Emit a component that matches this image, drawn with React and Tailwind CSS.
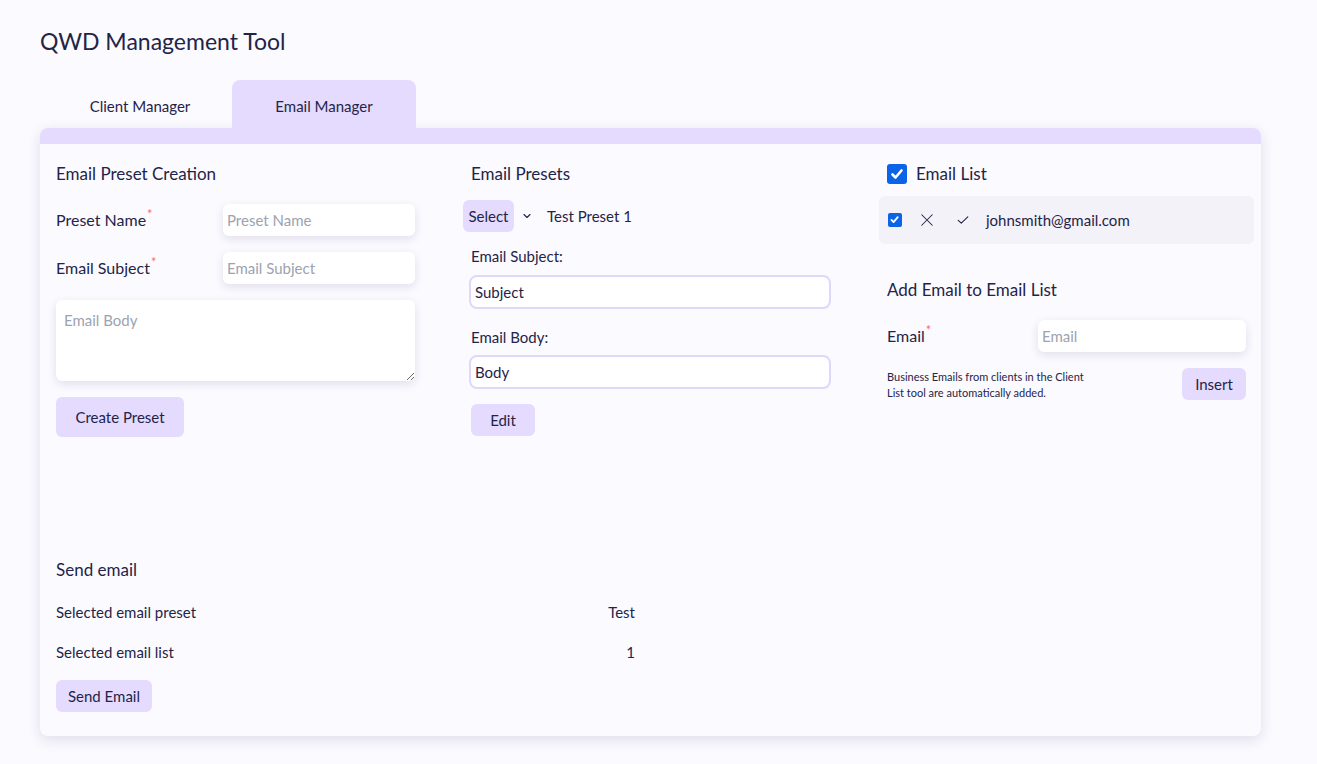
import { useState } from 'react';

const FONT = { fontFamily: 'Lato, "Noto Sans", sans-serif' };

function Req({ children }) {
  return (
    <span>
      {children}
      <span className="text-[#f87171] text-[13px] align-top relative -top-[3px] ml-[1px]">*</span>
    </span>
  );
}

function CheckBox({ size = 'lg' }) {
  const box = size === 'lg' ? 'w-5 h-5 rounded-[3px]' : 'w-[14px] h-[14px] rounded-[2px]';
  return (
    <span className={`${box} bg-[#0b63e6] flex items-center justify-center shrink-0`}>
      <svg viewBox="0 0 16 16" className="w-[80%] h-[80%]" fill="none" stroke="#fff" strokeWidth="2.6" strokeLinecap="round" strokeLinejoin="round">
        <path d="M3.5 8.5l3 3 6-7" />
      </svg>
    </span>
  );
}

function LavenderButton({ children, className = '' }) {
  return (
    <button className={`bg-[#e4dbfe] rounded-md text-[15px] text-[#1f2448] ${className}`}>{children}</button>
  );
}

function PresetCreation() {
  return (
    <div className="flex flex-col">
      <h2 className="text-[17px] leading-6 h-6 mt-[18px]">Email Preset Creation</h2>
      <div className="flex items-center justify-between mt-[18px]">
        <Req>Preset Name</Req>
        <input className="w-[192px] h-8 bg-white rounded-md shadow-[0_3px_10px_rgba(30,20,80,0.12)] px-1 text-[15px] outline-none placeholder:text-[#9ca3af]" placeholder="Preset Name" />
      </div>
      <div className="flex items-center justify-between mt-4">
        <Req>Email Subject</Req>
        <input className="w-[192px] h-8 bg-white rounded-md shadow-[0_3px_10px_rgba(30,20,80,0.12)] px-1 text-[15px] outline-none placeholder:text-[#9ca3af]" placeholder="Email Subject" />
      </div>
      <textarea className="mt-4 h-[81px] bg-white rounded-md shadow-[0_3px_10px_rgba(30,20,80,0.12)] px-2 py-[9px] text-[15px] outline-none placeholder:text-[#9ca3af] resize-y" placeholder="Email Body" />
      <div className="mt-4">
        <LavenderButton className="w-32 h-10">Create Preset</LavenderButton>
      </div>
    </div>
  );
}

function Presets() {
  return (
    <div className="flex flex-col">
      <h2 className="text-[17px] leading-6 h-6 mt-[18px]">Email Presets</h2>
      <div className="flex items-center mt-[14px] -ml-2">
        <LavenderButton className="w-[51px] h-8">Select</LavenderButton>
        <svg viewBox="0 0 16 16" className="w-3 h-3 ml-[7px]" fill="none" stroke="#1f2448" strokeWidth="1.5" strokeLinecap="round" strokeLinejoin="round">
          <path d="M4 6l4 4 4-4" />
        </svg>
        <span className="ml-[14px] text-[15px]">Test Preset 1</span>
      </div>
      <label className="text-[15px] mt-[14px] leading-5">Email Subject:</label>
      <div className="mt-[9px] -ml-[2px] h-[34px] bg-white border-2 border-[#e0d7fb] rounded-lg flex items-center px-[4px] text-[15px]">Subject</div>
      <label className="text-[15px] mt-[18px] leading-5">Email Body:</label>
      <div className="mt-2 -ml-[2px] h-[34px] bg-white border-2 border-[#e0d7fb] rounded-lg flex items-center px-[4px] text-[15px]">Body</div>
      <div className="mt-[15px]">
        <LavenderButton className="w-16 h-8">Edit</LavenderButton>
      </div>
    </div>
  );
}

function EmailList() {
  return (
    <div className="flex flex-col">
      <div className="flex items-center gap-[9px] mt-[18px] h-6">
        <CheckBox />
        <h2 className="text-[17px] leading-6">Email List</h2>
      </div>
      <div className="mt-[10px] -mx-2 h-12 bg-[#f3f2f8] rounded-md flex items-center px-[9px] text-[15px]">
        <CheckBox size="sm" />
        <svg viewBox="0 0 16 16" className="w-[14px] h-[14px] ml-[18px]" fill="none" stroke="#1f2448" strokeWidth="1.2" strokeLinecap="round">
          <path d="M2 2l12 12M14 2L2 14" />
        </svg>
        <svg viewBox="0 0 16 16" className="w-[14px] h-[14px] ml-[22px]" fill="none" stroke="#1f2448" strokeWidth="1.3" strokeLinecap="round" strokeLinejoin="round">
          <path d="M2.5 8.5l3.5 3 7.5-7" />
        </svg>
        <span className="ml-[16px]">johnsmith@gmail.com</span>
      </div>
      <h2 className="text-[17px] leading-6 mt-[34px]">Add Email to Email List</h2>
      <div className="flex items-center justify-between mt-[18px]">
        <Req>Email</Req>
        <input className="w-[208px] h-8 bg-white rounded-md shadow-[0_3px_10px_rgba(30,20,80,0.12)] px-1 text-[15px] outline-none placeholder:text-[#9ca3af]" placeholder="Email" />
      </div>
      <div className="flex items-start justify-between mt-4">
        <p className="text-[11px] leading-4 w-[206px] mt-[1px]">Business Emails from clients in the Client List tool are automatically added.</p>
        <LavenderButton className="w-16 h-8">Insert</LavenderButton>
      </div>
    </div>
  );
}

function SendEmail() {
  return (
    <div className="flex flex-col w-[579px] pb-6">
      <h2 className="text-[17px] leading-6">Send email</h2>
      <div className="flex justify-between mt-5 text-[15px] leading-5">
        <span>Selected email preset</span>
        <span>Test</span>
      </div>
      <div className="flex justify-between mt-5 text-[15px] leading-5">
        <span>Selected email list</span>
        <span>1</span>
      </div>
      <div className="mt-[18px]">
        <LavenderButton className="w-24 h-8">Send Email</LavenderButton>
      </div>
    </div>
  );
}

export default function App() {
  const [tab, setTab] = useState('email');
  return (
    <div className="min-h-[764px] bg-[#fbfaff] text-[#1f2448] px-10 pt-[26px] pb-7" style={FONT}>
      <h1 className="text-[23px] leading-[30px] h-[30px]">QWD Management Tool</h1>
      <div className="flex ml-2 mt-6">
        {[
          ['client', 'Client Manager'],
          ['email', 'Email Manager'],
        ].map(([key, label]) => (
          <button
            key={key}
            onClick={() => setTab(key)}
            className={`w-[184px] h-12 rounded-t-lg text-[15px] pt-1 ${tab === key ? 'bg-[#e4dbfe]' : ''}`}
          >
            {label}
          </button>
        ))}
      </div>
      <div className="w-[1221px] h-[608px] bg-[#fbfaff] rounded-lg shadow-[0_4px_14px_rgba(40,30,90,0.13)] overflow-hidden flex flex-col">
        <div className="h-4 bg-[#e4dbfe] shrink-0" />
        <div className="flex-1 px-4 flex flex-col justify-between">
          <div className="grid grid-cols-[359px_360px_359px] gap-x-[56px]">
            <PresetCreation />
            <Presets />
            <EmailList />
          </div>
          <SendEmail />
        </div>
      </div>
    </div>
  );
}
